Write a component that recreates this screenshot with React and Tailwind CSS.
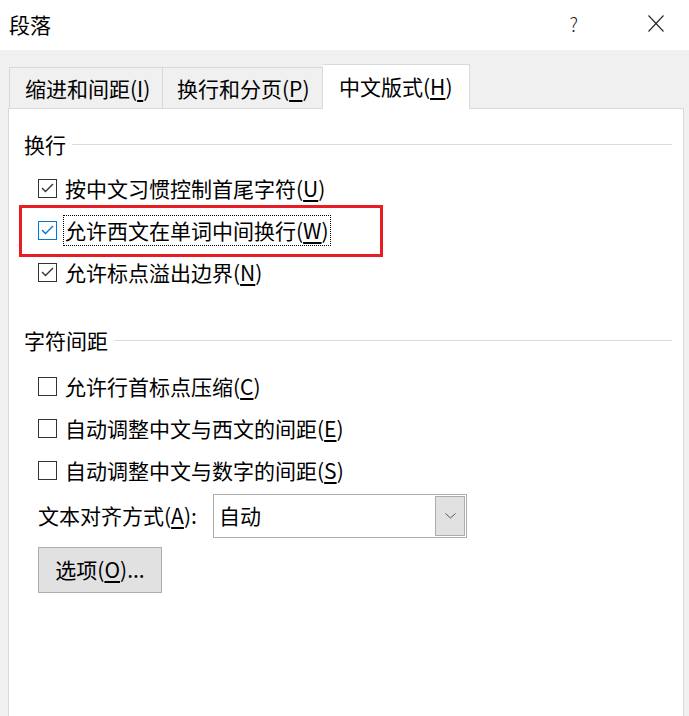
import React from 'react';

const FONT = { fontFamily: '"Noto Sans CJK SC", "Noto Sans", sans-serif' };

const Check = ({ color }) => (
  <svg width="13" height="10" viewBox="0 0 13 10" className="block">
    <polyline points="1,5 4.5,8.5 12,1" fill="none" stroke={color} strokeWidth="1.4" />
  </svg>
);

const CheckRow = ({ checked, focused, label, hotkey }) => (
  <div className="flex items-center h-[42px] pl-[14px]">
    <div
      className={`w-[19px] h-[19px] border flex items-center justify-center bg-white ${
        focused ? 'border-[#0078d7]' : 'border-[#333333]'
      }`}
    >
      {checked && <Check color={focused ? '#0078d7' : '#333333'} />}
    </div>
    <span
      className={`ml-[6px] px-[1px] leading-[29px] border ${
        focused ? 'border-dotted border-black' : 'border-transparent'
      }`}
    >
      {label}(<span className="underline underline-offset-[3px]">{hotkey}</span>)
    </span>
  </div>
);

const Section = ({ title }) => (
  <div className="flex items-center h-[28px]">
    <span className="leading-[28px]">{title}</span>
    <div className="flex-1 ml-[6px] h-px bg-[#dcdcdc]" />
  </div>
);

export default function App() {
  return (
    <div className="relative w-[689px] h-[716px] bg-[#f0f0f0] flex flex-col overflow-hidden text-black text-[21px]" style={FONT}>
      {/* Title bar */}
      <div className="h-[50px] bg-white flex items-center justify-between pl-[9px] pr-[25px] shrink-0">
        <span className="text-[21px] leading-none -mt-[2px]">段落</span>
        <div className="flex items-center">
          <span className="text-[19px] font-light text-[#222] leading-none mr-[70px] -mt-[4px]">?</span>
          <svg width="16" height="17" viewBox="0 0 16 17" className="-mt-[4px]">
            <line x1="0.5" y1="0.5" x2="15.5" y2="16.5" stroke="#222" strokeWidth="1.1" />
            <line x1="15.5" y1="0.5" x2="0.5" y2="16.5" stroke="#222" strokeWidth="1.1" />
          </svg>
        </div>
      </div>

      {/* Tabs */}
      <div className="flex items-end pl-[9px] pt-[14px] shrink-0 relative z-10 -mb-px">
        <div className="w-[154px] h-[42px] border border-b-0 border-[#d9d9d9] flex items-center pl-[15px] pt-[1px]">
          缩进和间距(<span className="underline underline-offset-[3px]">I</span>)
        </div>
        <div className="w-[160px] h-[42px] border border-l-0 border-b-0 border-[#d9d9d9] flex items-center pl-[14px] pt-[1px]">
          换行和分页(<span className="underline underline-offset-[3px]">P</span>)
        </div>
        <div className="w-[147px] h-[45px] bg-white border border-l-0 border-b-0 border-[#d9d9d9] flex items-center pl-[16px] pb-[1px]">
          中文版式(<span className="underline underline-offset-[3px]">H</span>)
        </div>
      </div>

      {/* Panel */}
      <div className="ml-[8px] w-[676px] flex-1 bg-white border border-b-0 border-[#d9d9d9] pt-[21px] pl-[15px] pr-[11px]">
        <Section title="换行" />
        <div className="mt-[9px]">
          <CheckRow checked label="按中文习惯控制首尾字符" hotkey="U" />
          <CheckRow checked focused label="允许西文在单词中间换行" hotkey="W" />
          <CheckRow checked label="允许标点溢出边界" hotkey="N" />
        </div>

        <div className="mt-[33px]">
          <Section title="字符间距" />
        </div>
        <div className="mt-[11px]">
          <CheckRow label="允许行首标点压缩" hotkey="C" />
          <CheckRow label="自动调整中文与西文的间距" hotkey="E" />
          <CheckRow label="自动调整中文与数字的间距" hotkey="S" />
        </div>

        <div className="mt-[3px] flex items-center h-[44px] pl-[14px]">
          <span className="w-[175px]">
            文本对齐方式(<span className="underline underline-offset-[3px]">A</span>):
          </span>
          <div className="w-[254px] h-[44px] border border-[#adadad] bg-white flex items-stretch">
            <span className="flex-1 pl-[5px] flex items-center">自动</span>
            <div className="w-[30px] m-[1px] bg-[#e1e1e1] border border-[#adadad] flex items-center justify-center">
              <svg width="11" height="6" viewBox="0 0 11 6">
                <polyline points="0.5,0.5 5.5,5 10.5,0.5" fill="none" stroke="#555" strokeWidth="1" />
              </svg>
            </div>
          </div>
        </div>

        <div className="mt-[9px] pl-[14px]">
          <div className="w-[124px] h-[46px] bg-[#e1e1e1] border border-[#adadad] flex items-center justify-center">
            选项(<span className="underline underline-offset-[3px]">O</span>)...
          </div>
        </div>
      </div>

      {/* Annotation box */}
      <div className="absolute left-[19px] top-[205px] w-[364px] h-[52px] border-[3px] border-[#e81c24] pointer-events-none" />
    </div>
  );
}
